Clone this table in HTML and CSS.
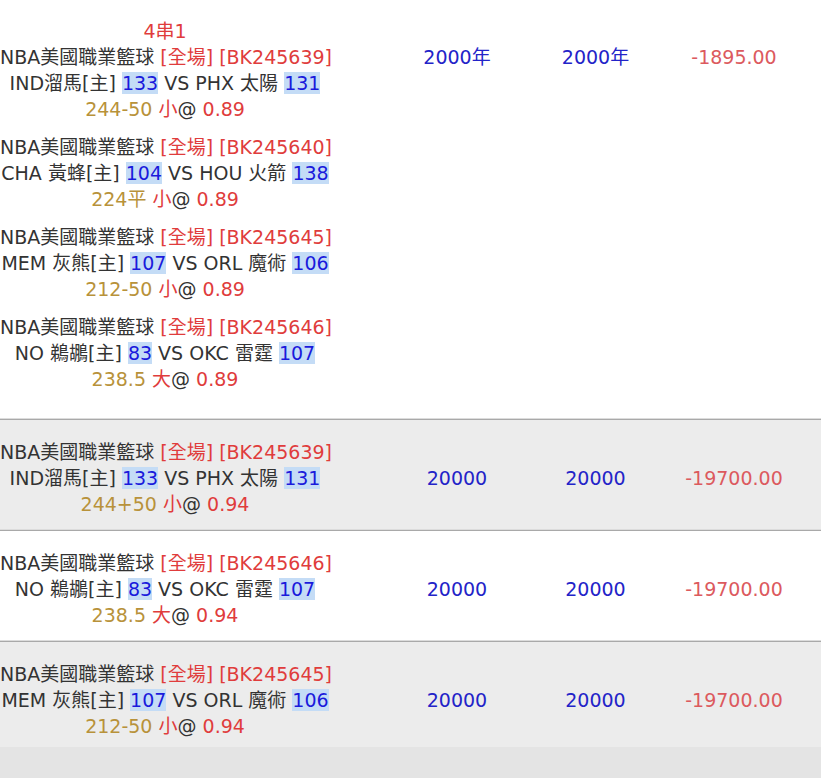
FILE: index.html
```html
<!DOCTYPE html>
<html lang="zh-Hant">
<head>
<meta charset="utf-8">
<title>注單</title>
<link rel="stylesheet" href="styles.css">
</head>
<body>
<div class="list">
  <div class="row parlay">
    <div class="bets">
      <div class="combo">4串1</div>
      <div class="bet">
        <div class="line">NBA美國職業籃球 <span class="red">[全場] [BK245639]</span></div>
        <div class="line">IND溜馬[主] <span class="score">133</span> VS PHX 太陽 <span class="score">131</span></div>
        <div class="line"><span class="gold">244-50</span> <span class="red">小</span>@ <span class="red">0.89</span></div>
      </div>
      <div class="bet">
        <div class="line">NBA美國職業籃球 <span class="red">[全場] [BK245640]</span></div>
        <div class="line">CHA 黃蜂[主] <span class="score">104</span> VS HOU 火箭 <span class="score">138</span></div>
        <div class="line"><span class="gold">224平</span> <span class="red">小</span>@ <span class="red">0.89</span></div>
      </div>
      <div class="bet">
        <div class="line">NBA美國職業籃球 <span class="red">[全場] [BK245645]</span></div>
        <div class="line">MEM 灰熊[主] <span class="score">107</span> VS ORL 魔術 <span class="score">106</span></div>
        <div class="line"><span class="gold">212-50</span> <span class="red">小</span>@ <span class="red">0.89</span></div>
      </div>
      <div class="bet">
        <div class="line">NBA美國職業籃球 <span class="red">[全場] [BK245646]</span></div>
        <div class="line">NO 鵜鶘[主] <span class="score">83</span> VS OKC 雷霆 <span class="score">107</span></div>
        <div class="line"><span class="gold">238.5</span> <span class="red">大</span>@ <span class="red">0.89</span></div>
      </div>
    </div>
    <div class="val blue">2000年</div>
    <div class="val blue">2000年</div>
    <div class="val loss">-1895.00</div>
  </div>

  <div class="row alt">
    <div class="bets">
      <div class="bet">
        <div class="line">NBA美國職業籃球 <span class="red">[全場] [BK245639]</span></div>
        <div class="line">IND溜馬[主] <span class="score">133</span> VS PHX 太陽 <span class="score">131</span></div>
        <div class="line"><span class="gold">244+50</span> <span class="red">小</span>@ <span class="red">0.94</span></div>
      </div>
    </div>
    <div class="val blue">20000</div>
    <div class="val blue">20000</div>
    <div class="val loss">-19700.00</div>
  </div>

  <div class="row">
    <div class="bets">
      <div class="bet">
        <div class="line">NBA美國職業籃球 <span class="red">[全場] [BK245646]</span></div>
        <div class="line">NO 鵜鶘[主] <span class="score">83</span> VS OKC 雷霆 <span class="score">107</span></div>
        <div class="line"><span class="gold">238.5</span> <span class="red">大</span>@ <span class="red">0.94</span></div>
      </div>
    </div>
    <div class="val blue">20000</div>
    <div class="val blue">20000</div>
    <div class="val loss">-19700.00</div>
  </div>

  <div class="row alt last">
    <div class="bets">
      <div class="bet">
        <div class="line">NBA美國職業籃球 <span class="red">[全場] [BK245645]</span></div>
        <div class="line">MEM 灰熊[主] <span class="score">107</span> VS ORL 魔術 <span class="score">106</span></div>
        <div class="line"><span class="gold">212-50</span> <span class="red">小</span>@ <span class="red">0.94</span></div>
      </div>
    </div>
    <div class="val blue">20000</div>
    <div class="val blue">20000</div>
    <div class="val loss">-19700.00</div>
  </div>
</div>
</body>
</html>
```
FILE: styles.css
```css
html, body {
  margin: 0;
  padding: 0;
}
body {
  background: #e4e4e4;
  font-family: "DejaVu Sans", Verdana, "Noto Sans CJK TC", sans-serif;
  font-size: 19px;
  color: #333;
}
.list {
  display: flex;
  flex-direction: column;
}
.row {
  display: grid;
  grid-template-columns: 388px 138px 139px 138px;
  column-gap: 0;
  padding: 19px 0 13px;
  background: #fff;
  border-bottom: 1px solid #a9a9a9;
  box-shadow: inset 0 -1px 0 #dcdcdc;
}
.row.alt {
  background: #ececec;
}
.row.parlay {
  padding-bottom: 27px;
}
.row.last {
  padding-bottom: 8px;
  border-bottom: none;
  box-shadow: none;
}
.bets {
  display: flex;
  flex-direction: column;
  gap: 12px;
  width: 330px;
  grid-column: 1;
}
.combo {
  color: #e03c3c;
  text-align: center;
  line-height: 25px;
  margin-bottom: -12px;
  white-space: nowrap;
}
.bet {
  display: flex;
  flex-direction: column;
}
.line {
  line-height: 26px;
  text-align: center;
  white-space: nowrap;
}
.red { color: #e03c3c; }
.gold { color: #b8923a; }
.score {
  color: #1a1adc;
  background: #c4dcf6;
}
.val {
  align-self: center;
  text-align: center;
  line-height: 26px;
  white-space: nowrap;
}
.row.parlay .val {
  align-self: start;
  padding-top: 25px;
}
.blue { color: #2323c8; }
.loss { color: #dc5a5e; }
```
